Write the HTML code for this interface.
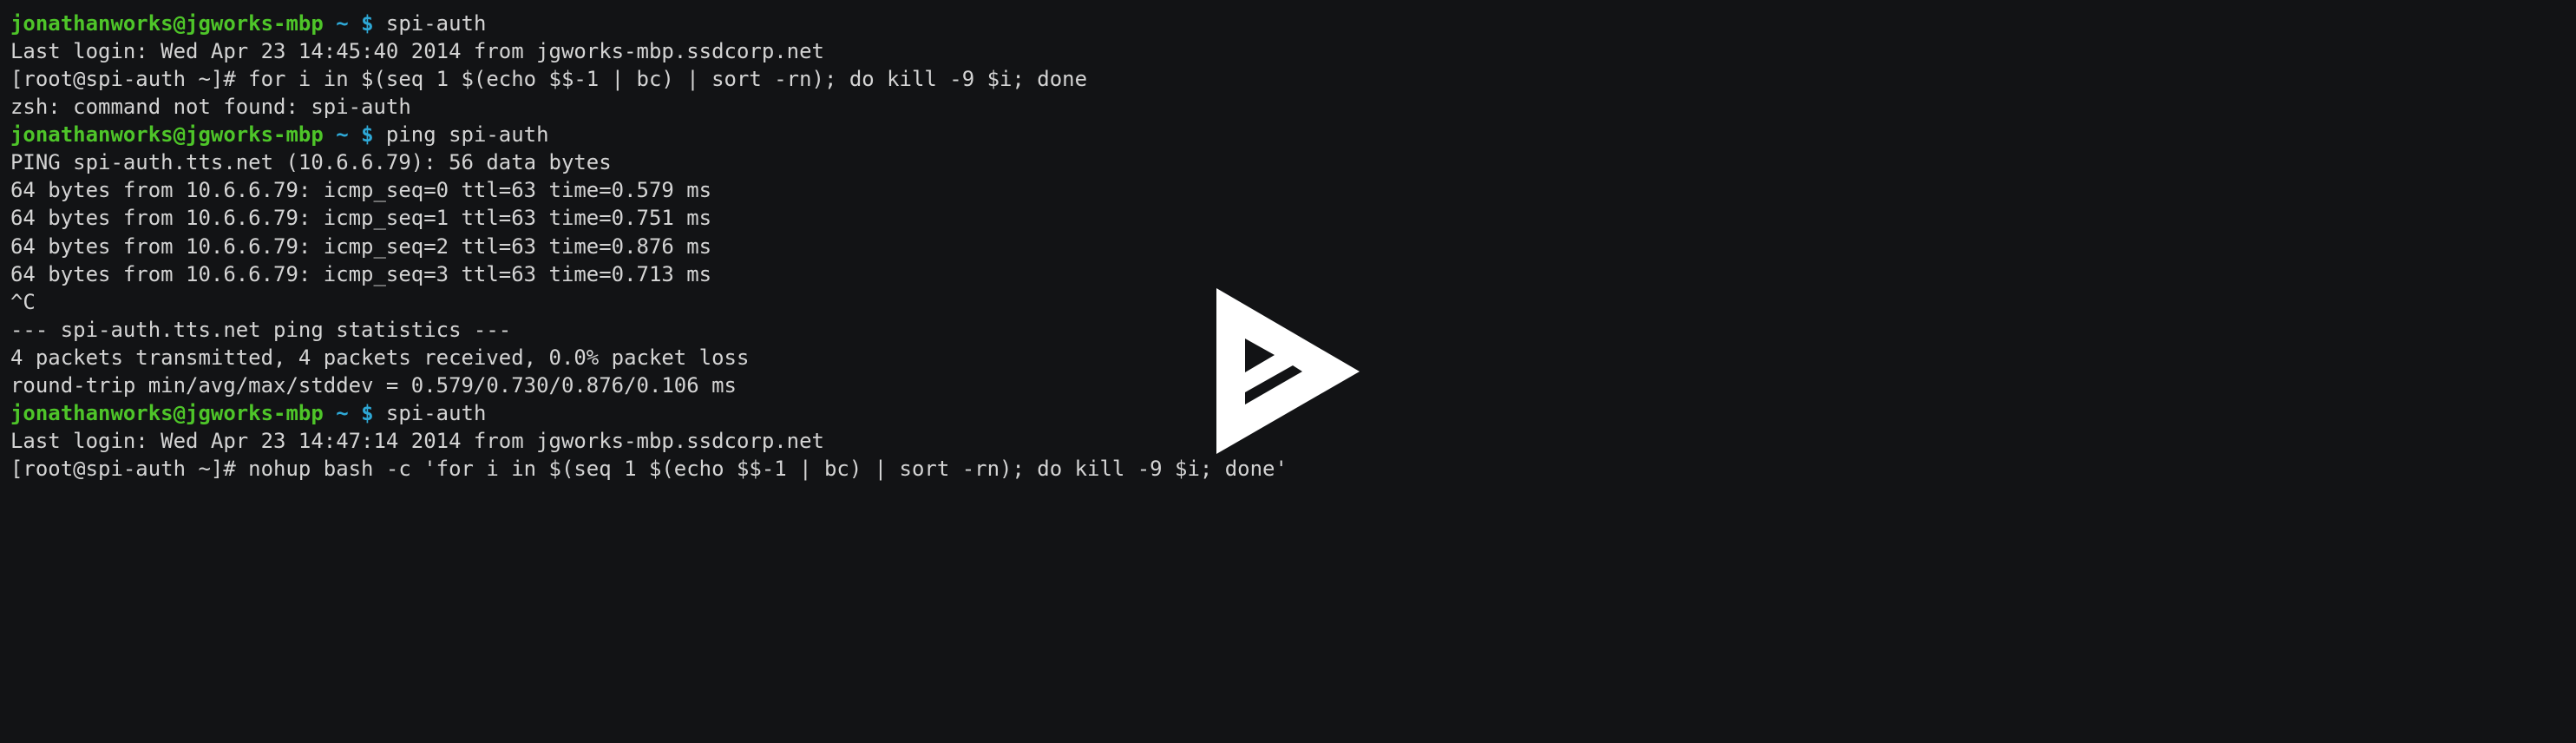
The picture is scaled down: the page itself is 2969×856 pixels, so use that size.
<!DOCTYPE html>
<html><head><meta charset="utf-8"><style>
html,body{margin:0;padding:0;background:#121315;width:2969px;height:856px;overflow:hidden}
pre{margin:0;padding:11px 0 0 12px;font-family:"DejaVu Sans Mono","Liberation Mono",monospace;font-size:23.97px;line-height:32.07px;color:#d4d4d4;white-space:pre}
.g{color:#4ec529;font-weight:bold}.b{color:#2ea8d6;font-weight:bold}
svg{position:absolute;left:0;top:0}
</style></head><body>
<pre><span class="g">jonathanworks@jgworks-mbp</span> <span class="b">~ $</span> spi-auth
Last login: Wed Apr 23 14:45:40 2014 from jgworks-mbp.ssdcorp.net
[root@spi-auth ~]# for i in $(seq 1 $(echo $$-1 | bc) | sort -rn); do kill -9 $i; done
zsh: command not found: spi-auth
<span class="g">jonathanworks@jgworks-mbp</span> <span class="b">~ $</span> ping spi-auth
PING spi-auth.tts.net (10.6.6.79): 56 data bytes
64 bytes from 10.6.6.79: icmp_seq=0 ttl=63 time=0.579 ms
64 bytes from 10.6.6.79: icmp_seq=1 ttl=63 time=0.751 ms
64 bytes from 10.6.6.79: icmp_seq=2 ttl=63 time=0.876 ms
64 bytes from 10.6.6.79: icmp_seq=3 ttl=63 time=0.713 ms
^C
--- spi-auth.tts.net ping statistics ---
4 packets transmitted, 4 packets received, 0.0% packet loss
round-trip min/avg/max/stddev = 0.579/0.730/0.876/0.106 ms
<span class="g">jonathanworks@jgworks-mbp</span> <span class="b">~ $</span> spi-auth
Last login: Wed Apr 23 14:47:14 2014 from jgworks-mbp.ssdcorp.net
[root@spi-auth ~]# nohup bash -c 'for i in $(seq 1 $(echo $$-1 | bc) | sort -rn); do kill -9 $i; done'</pre>
<svg width="2969" height="856" viewBox="0 0 2969 856">
<path fill="#fff" fill-rule="evenodd" d="M1402 332 L1567 428 L1402 523 Z M1435 390 L1469 409 L1435 429 Z M1435 452 L1490 421 L1501 428 L1435 466 Z"/>
</svg>
</body></html>
